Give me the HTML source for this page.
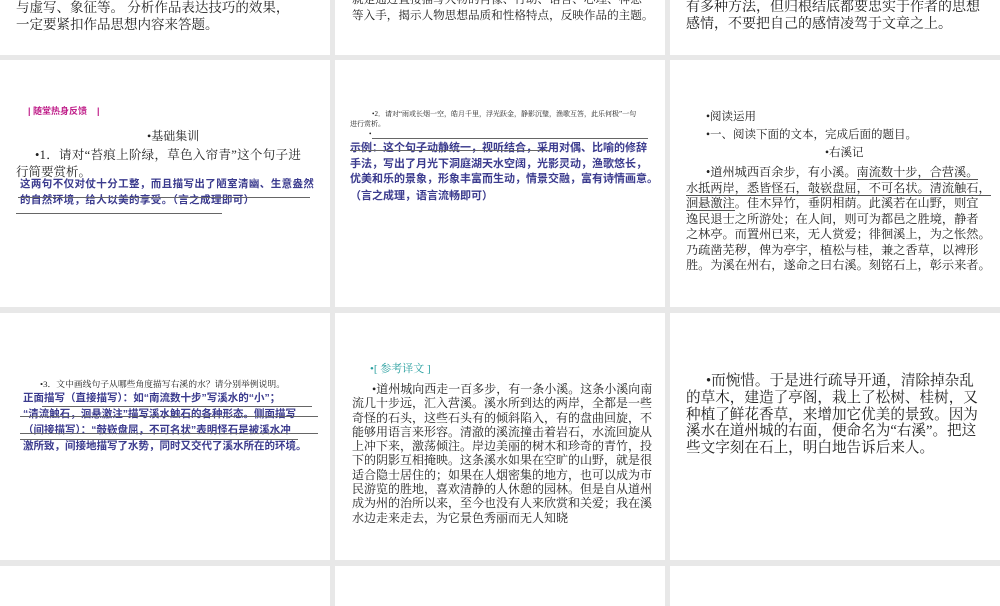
<!DOCTYPE html>
<html><head><meta charset="utf-8"><style>
html,body{margin:0;padding:0;width:1000px;height:600px;overflow:hidden;background:#e8e8e8;}
.s{position:absolute;background:#fff;overflow:hidden;}
.t{position:absolute;white-space:nowrap;font-family:"Liberation Serif","Noto Serif CJK SC",serif;color:#222;line-height:1;}
.b{position:absolute;white-space:nowrap;font-family:"Liberation Sans","Noto Sans CJK SC",sans-serif;color:#3b3b8e;font-weight:bold;line-height:1;}
.l{position:absolute;height:1px;background:#666;}
u{text-decoration:none;border-bottom:1px solid #555;}
</style></head><body>
<!-- row1 -->
<div class="s" style="left:0;top:0;width:330px;height:55px">
<div class="t" style="left:16px;top:1px;font-size:13.5px">与虚写、象征等。 分析作品表达技巧的效果，</div>
<div class="t" style="left:16px;top:18px;font-size:13.5px">一定要紧扣作品思想内容来答题。</div>
</div>
<div class="s" style="left:335px;top:0;width:330px;height:55px">
<div class="t" style="left:17px;top:-6px;font-size:11.6px">就是通过直接描写人物的肖像、行动、语言、心理、神态</div>
<div class="t" style="left:17px;top:10px;font-size:11.6px">等入手，揭示人物思想品质和性格特点，反映作品的主题。</div>
</div>
<div class="s" style="left:670px;top:0;width:330px;height:55px">
<div class="t" style="left:16px;top:1px;font-size:14px">有多种方法，但归根结底都要忠实于作者的思想</div>
<div class="t" style="left:16px;top:18px;font-size:14px">感情，不要把自己的感情凌驾于文章之上。</div>
</div>
<!-- row2 -->
<div class="s" style="left:0;top:60px;width:330px;height:247px">
<div class="b" style="left:28px;top:47px;font-size:9px;color:#c0208a">| 随堂热身反馈&nbsp;&nbsp;&nbsp;&nbsp;|</div>
<div class="t" style="left:147px;top:70px;font-size:12px">•基础集训</div>
<div class="t" style="left:35px;top:89px;font-size:12.5px;letter-spacing:0.3px">•1．请对“苔痕上阶绿，草色入帘青”这个句子进</div>
<div class="t" style="left:16px;top:106px;font-size:12.5px">行简要赏析。</div>
<div class="b" style="left:20px;top:119px;font-size:10.5px;letter-spacing:0.4px">这两句不仅对仗十分工整，而且描写出了陋室清幽、生意盎然</div>
<div class="b" style="left:20px;top:135px;font-size:10.5px;letter-spacing:0.4px">的自然环境，给人以美的享受。（言之成理即可）</div>
<div class="l" style="left:18px;top:137px;width:292px"></div>
<div class="l" style="left:16px;top:153px;width:206px"></div>
</div>
<div class="s" style="left:335px;top:60px;width:330px;height:247px">
<div class="t" style="left:37px;top:51px;font-size:7px">•2．请对“雨或长烟一空，皓月千里，浮光跃金，静影沉璧，渔歌互答，此乐何极”一句</div>
<div class="t" style="left:15px;top:61px;font-size:7px">进行赏析。</div>
<div class="t" style="left:34px;top:71px;font-size:7px">•</div>
<div class="l" style="left:37px;top:78px;width:276px"></div>
<div class="b" style="left:15px;top:83px;font-size:11px">示例：这个句子动静统一，视听结合，采用对偶、比喻的修辞</div>
<div class="b" style="left:15px;top:99px;font-size:11px">手法，写出了月光下洞庭湖天水空阔，光影灵动，渔歌悠长，</div>
<div class="b" style="left:15px;top:114px;font-size:11px">优美和乐的景象，形象丰富而生动，情景交融，富有诗情画意。</div>
<div class="b" style="left:15px;top:131px;font-size:11px">（言之成理，语言流畅即可）</div>
<div class="l" style="left:15px;top:90px;width:200px"></div>
</div>
<div class="s" style="left:670px;top:60px;width:330px;height:247px">
<div class="t" style="left:36px;top:52px;font-size:11.5px">•阅读运用</div>
<div class="t" style="left:36px;top:70px;font-size:11.5px">•一、阅读下面的文本，完成后面的题目。</div>
<div class="t" style="left:155px;top:88px;font-size:11.5px">•右溪记</div>
<div class="t" style="left:36px;top:106px;font-size:12.2px">•道州城西百余步，有小溪。<u>南流数十步，合营溪。</u></div>
<div class="t" style="left:16px;top:121.5px;font-size:12.2px"><u>水抵两岸，悉皆怪石，攲嵚盘屈，不可名状。清流触石，</u></div>
<div class="t" style="left:16px;top:137px;font-size:12.2px"><u>洄悬激注</u>。佳木异竹，垂阴相荫。此溪若在山野，则宜</div>
<div class="t" style="left:16px;top:152.5px;font-size:12.2px">逸民退士之所游处；在人间，则可为都邑之胜境，静者</div>
<div class="t" style="left:16px;top:168px;font-size:12.2px">之林亭。而置州已来，无人赏爱；徘徊溪上，为之怅然。</div>
<div class="t" style="left:16px;top:183.5px;font-size:12.2px">乃疏凿芜秽，俾为亭宇，植松与桂，兼之香草，以裨形</div>
<div class="t" style="left:16px;top:199px;font-size:12.2px">胜。为溪在州右，遂命之曰右溪。刻铭石上，彰示来者。</div>
</div>
<!-- row3 -->
<div class="s" style="left:0;top:313px;width:330px;height:247px">
<div class="t" style="left:40px;top:67px;font-size:8.8px">•3．文中画线句子从哪些角度描写右溪的水？请分别举例说明。</div>
<div class="b" style="left:23px;top:80px;font-size:10.5px">正面描写（直接描写）：如“南流数十步”写溪水的“小”；</div>
<div class="b" style="left:23px;top:96px;font-size:10.5px">“清流触石，洄悬激注”描写溪水触石的各种形态。侧面描写</div>
<div class="b" style="left:23px;top:112px;font-size:10.5px">（间接描写）：“攲嵚盘屈，不可名状”表明怪石是被溪水冲</div>
<div class="b" style="left:23px;top:128px;font-size:10.5px">激所致，间接地描写了水势，同时又交代了溪水所在的环境。</div>
<div class="l" style="left:42px;top:93px;width:270px"></div>
<div class="l" style="left:20px;top:103px;width:298px"></div>
<div class="l" style="left:20px;top:120px;width:298px"></div>
<div class="l" style="left:20px;top:126px;width:278px"></div>
</div>
<div class="s" style="left:335px;top:313px;width:330px;height:247px">
<div class="t" style="left:35px;top:51px;font-size:11px;color:#2aa0a0">•[ 参考译文 ]</div>
<div class="t" style="left:17px;top:69px;font-size:12px;line-height:14.3px;white-space:normal;width:302px;text-indent:20px">•道州城向西走一百多步，有一条小溪。这条小溪向南流几十步远，汇入营溪。溪水所到达的两岸，全都是一些奇怪的石头，这些石头有的倾斜陷入，有的盘曲回旋，不能够用语言来形容。清澈的溪流撞击着岩石，水流回旋从上冲下来，激荡倾注。岸边美丽的树木和珍奇的青竹，投下的阴影互相掩映。这条溪水如果在空旷的山野，就是很适合隐士居住的；如果在人烟密集的地方，也可以成为市民游览的胜地，喜欢清静的人休憩的园林。但是自从道州成为州的治所以来，至今也没有人来欣赏和关爱；我在溪水边走来走去，为它景色秀丽而无人知晓</div>
</div>
<div class="s" style="left:670px;top:313px;width:330px;height:247px">
<div class="t" style="left:16px;top:60px;font-size:14.6px;line-height:16.8px;white-space:normal;width:300px;text-indent:20px">•而惋惜。于是进行疏导开通，清除掉杂乱的草木，建造了亭阁，栽上了松树、桂树，又种植了鲜花香草，来增加它优美的景致。因为溪水在道州城的右面，便命名为“右溪”。把这些文字刻在石上，明白地告诉后来人。</div>
</div>
<!-- row4 -->
<div class="s" style="left:0;top:566px;width:330px;height:40px"></div>
<div class="s" style="left:335px;top:566px;width:330px;height:40px"></div>
<div class="s" style="left:670px;top:566px;width:330px;height:40px"></div>
</body></html>
